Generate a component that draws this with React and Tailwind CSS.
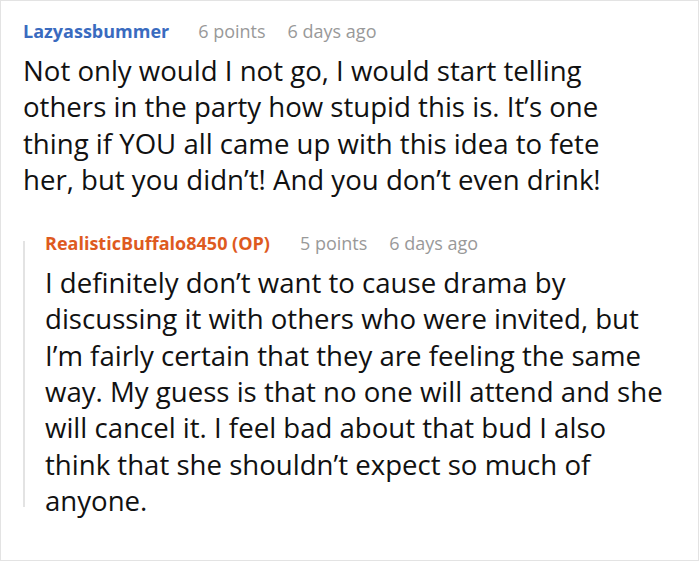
export default function App() {
  return (
    <div className="h-[561px] w-[699px] border border-[#e3e3e3] bg-white pl-[22px] pr-[23px] pt-[18px] font-['Open_Sans',sans-serif]">
      <div className="flex items-center text-[18px] leading-[24px]">
        <span className="font-bold text-[#3a6bbf]">Lazyassbummer</span>
        <span className="ml-[29px] text-[#999]">6 points</span>
        <span className="ml-[22px] text-[#999]">6 days ago</span>
      </div>
      <p className="mt-[9px] pr-[40px] text-[27.6px] leading-[36.3px] text-[#111]">
        Not only would I not go, I would start telling others in the party how stupid this is. It’s one thing if YOU all came up with this idea to fete her, but you didn’t! And you don’t even drink!
      </p>
      <div className="mt-[34px] flex">
        <div className="mb-[11px] mt-[10px] w-[2px] shrink-0 bg-[#e3e3e3]" />
        <div className="pl-[20px]">
          <div className="flex items-center text-[18px] leading-[24px]">
            <span className="font-bold text-[#de5a1f]">RealisticBuffalo8450 (OP)</span>
            <span className="ml-[30px] text-[#999]">5 points</span>
            <span className="ml-[22px] text-[#999]">6 days ago</span>
          </div>
          <p className="mt-[9px] text-[27.6px] leading-[36.3px] text-[#111]">
            I definitely don’t want to cause drama by discussing it with others who were invited, but I’m fairly certain that they are feeling the same way. My guess is that no one will attend and she will cancel it. I feel bad about that bud I also think that she shouldn’t expect so much of anyone.
          </p>
        </div>
      </div>
    </div>
  );
}
